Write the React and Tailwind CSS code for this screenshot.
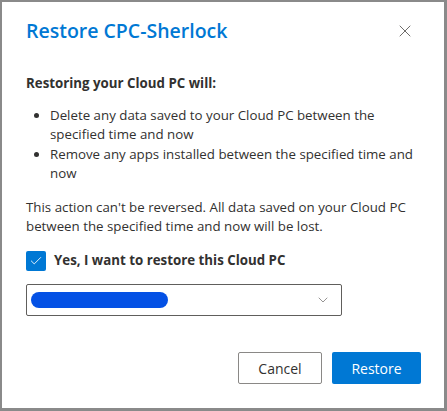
import { Check, ChevronDown, X } from 'lucide-react';

export default function App() {
  return (
    <div className="w-[447px] h-[411px] bg-[#8a8a8a] pt-[2px] pl-[2px] pr-[3px] pb-[3px]">
      <div
        className="h-full bg-white pl-6 pr-[23px] pt-[15px] text-[#323130] text-[13.3px]"
        style={{ fontFamily: '"Open Sans", "Noto Sans", sans-serif' }}
      >
        <div className="flex items-center justify-between h-7">
          <h2 className="text-[19.5px] font-semibold text-[#0078d4] leading-7">Restore CPC-Sherlock</h2>
          <X size={20} strokeWidth={1.1} className="text-[#605e5c] mr-[6px]" />
        </div>

        <p className="font-bold mt-[29px] leading-[19px]">Restoring your Cloud PC will:</p>

        <ul className="mt-[13px] list-disc pl-6 leading-[19px] space-y-[1px]">
          <li>Delete any data saved to your Cloud PC between the specified time and now</li>
          <li>Remove any apps installed between the specified time and now</li>
        </ul>

        <p className="mt-[15px] leading-[19px]">
          This action can't be reversed. All data saved on your Cloud PC between the specified time and now will be lost.
        </p>

        <label className="flex items-center gap-2 mt-[15px]">
          <span className="w-5 h-5 bg-[#0078d4] flex items-center justify-center rounded-[2px]">
            <Check size={14} strokeWidth={1.5} className="text-white" />
          </span>
          <span className="font-bold">Yes, I want to restore this Cloud PC</span>
        </label>

        <div className="mt-[13px] w-[316px] h-[32px] border border-[#605e5c] rounded-[2px] flex items-center justify-between pl-[4px] pr-[10px]">
          <span className="w-[137px] h-[16px] rounded-full bg-[#0451e5]" />
          <ChevronDown size={16} strokeWidth={1} className="text-[#605e5c]" />
        </div>

        <div className="flex justify-end gap-[10px] mt-[36px]">
          <button className="w-[84px] h-[32px] border border-[#8a8886] rounded-[2px] bg-white text-[14px] text-[#323130]">
            Cancel
          </button>
          <button className="w-[89px] h-[32px] rounded-[2px] bg-[#0078d4] text-[14px] text-white">
            Restore
          </button>
        </div>
      </div>
    </div>
  );
}
